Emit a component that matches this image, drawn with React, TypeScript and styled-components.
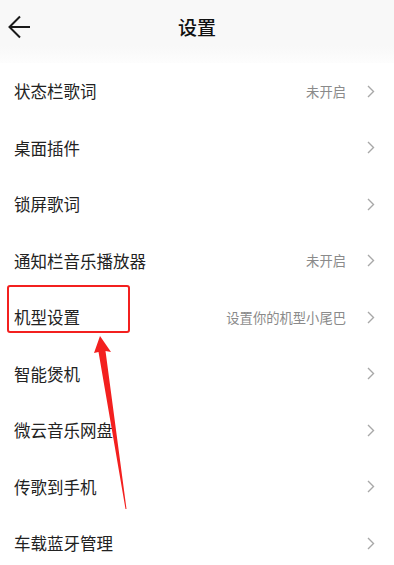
import React from 'react';
import styled, { createGlobalStyle } from 'styled-components';

const GlobalStyle = createGlobalStyle`
  html, body { margin: 0; padding: 0; background: #fff; }
  body { font-family: "Noto Sans CJK SC", "Noto Sans", sans-serif; }
`;

type SettingItem = { label: string; hint?: string };

const items: SettingItem[] = [
  { label: '状态栏歌词', hint: '未开启' },
  { label: '桌面插件' },
  { label: '锁屏歌词' },
  { label: '通知栏音乐播放器', hint: '未开启' },
  { label: '机型设置', hint: '设置你的机型小尾巴' },
  { label: '智能煲机' },
  { label: '微云音乐网盘' },
  { label: '传歌到手机' },
  { label: '车载蓝牙管理' },
];

// --- Styled Components ---
const Page = styled.div` position: relative; width: 394px; height: 565px; overflow: hidden; background: #fff; `;
const Header = styled.header`
  position: relative; height: 63px; display: flex; align-items: flex-start; justify-content: center;
  background: linear-gradient(#f8f8f8 0, #f8f8f8 46px, #fdfdfd 63px);
`;
const BackButton = styled.button`
  position: absolute; left: 6px; top: 14px; width: 26px; height: 26px; padding: 0;
  border: none; background: none; display: flex; align-items: center; justify-content: center;
`;
const Title = styled.h1` margin: 0; padding-top: 13px; font-size: 19px; line-height: 28px; font-weight: 500; color: #111; `;
const List = styled.ul` list-style: none; margin: 0; padding: 0; `;
const Row = styled.li` height: 56.5px; display: flex; align-items: center; padding: 0 19px 0 14px; `;
const Label = styled.span` flex: 1; font-size: 16.5px; color: #222; letter-spacing: 0; `;
const Hint = styled.span` font-size: 13.3px; color: #8a8a8a; margin-right: 21px; `;
const Chevron = styled.svg` width: 8px; height: 13px; flex: none; `;
const Highlight = styled.div`
  position: absolute; left: 7px; top: 285px; width: 119px; height: 44px;
  border: 2.5px solid #f3201f; border-radius: 3px;
`;
const ArrowLayer = styled.svg` position: absolute; left: 0; top: 0; pointer-events: none; `;

const App = () => (
  <Page>
    <GlobalStyle />
    <Header>
      <BackButton aria-label="返回">
        <svg width="24" height="24" viewBox="0 0 24 24">
          <path d="M13 1.5 L2.5 12 L13 22.5 M2.5 12 H23" fill="none" stroke="#1a1a1a" strokeWidth="2" />
        </svg>
      </BackButton>
      <Title>设置</Title>
    </Header>
    <List>
      {items.map((item) => (
        <Row key={item.label}>
          <Label>{item.label}</Label>
          {item.hint && <Hint>{item.hint}</Hint>}
          <Chevron viewBox="0 0 8 13">
            <path d="M1 1 L6.5 6.5 L1 12" fill="none" stroke="#a8a8a8" strokeWidth="1.4" />
          </Chevron>
        </Row>
      ))}
    </List>
    <Highlight />
    <ArrowLayer width="394" height="565">
      <polygon
        points="100,336 111,352 105.5,351 126.5,509 125.5,509 98.5,352 94,353"
        fill="#f3201f"
      />
    </ArrowLayer>
  </Page>
);

export default App;
